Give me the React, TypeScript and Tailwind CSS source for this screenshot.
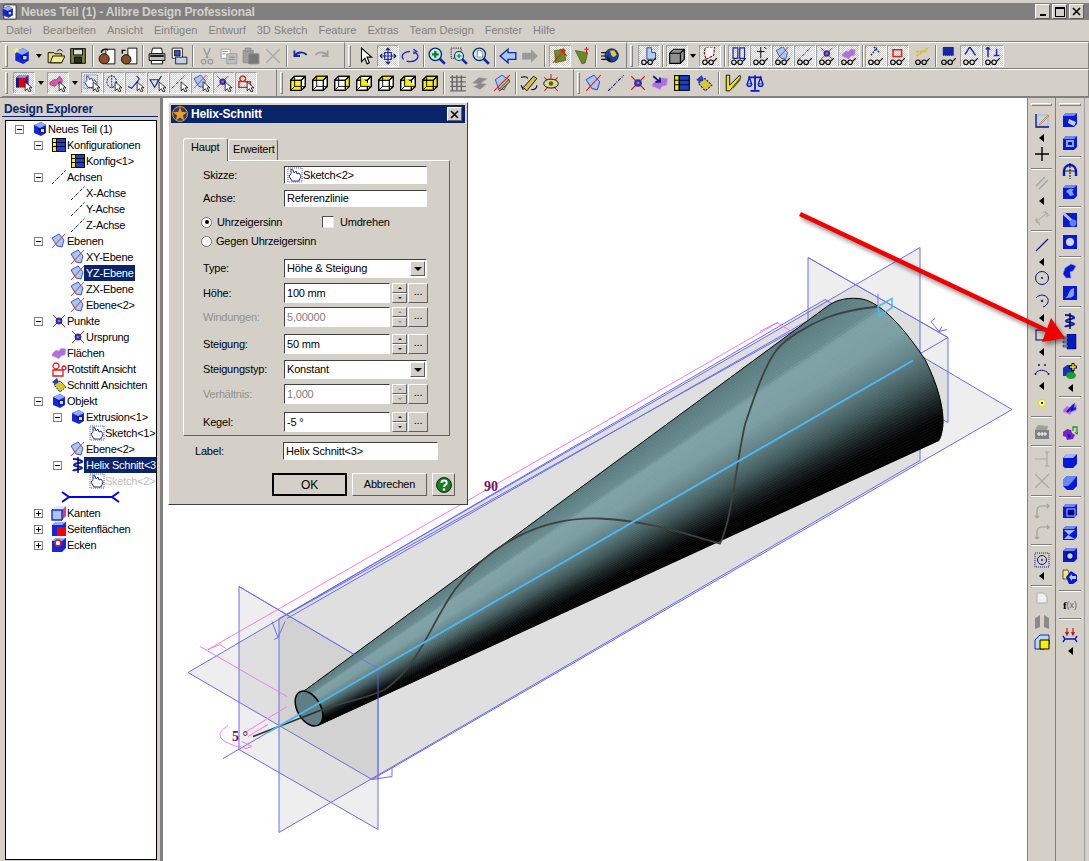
import React from "react";

const Cur = <path d="M9 7v8l2-2 1.5 3 1.6-.8-1.5-2.9H15z" fill="#fff" stroke="#000" strokeWidth=".7" />;
const Gl = (
  <g fill="none" stroke="#000" strokeWidth="1">
    <circle cx="3.5" cy="13.5" r="2" />
    <circle cx="9" cy="13.5" r="2" />
    <path d="M5.5 13.5H7M11 13l3-3" />
  </g>
);
const B = "#1428d8";
const planeShape = (
  <g>
    <path d="M1 5 8 1l5 6-2 7-5-1z" fill="#a8c8f0" stroke="#2030c0" strokeWidth=".8" />
    <path d="M1 15 14 1" stroke="#f01818" strokeWidth=".9" />
  </g>
);
const pointShape = (
  <g>
    <path d="M2 2l12 12M14 2 2 14" stroke="#e81818" strokeWidth="1" />
    <circle cx="8" cy="8" r="3.4" fill="#2030c0" />
    <circle cx="8" cy="8" r="1.3" fill="#f06060" />
  </g>
);
const axisShape = <path d="M1 15 15 1" stroke="#101060" strokeWidth="1" strokeDasharray="3 1.2 1 1.2" />;
const tableShape = (
  <g>
    <rect x="1.5" y="1.5" width="13" height="13" fill="#1840d8" stroke="#000" />
    <rect x="1.5" y="1.5" width="4" height="13" fill="#f8f000" stroke="#000" strokeWidth=".8" />
    <path d="M1.5 5.5h13M1.5 9.5h13M5.5 1.5v13" stroke="#000" strokeWidth="1" />
  </g>
);
const purpleShape = <path d="M1 9 5 5l3 1 2-3 5 1-1 6-4 1-2 3-4-2-3-1z" fill="#b070d8" stroke="#d8a8f0" strokeWidth=".6" />;
const partShape = (
  <g>
    <path d="M2 4 9 1l5 3v8l-5 3-7-3z" fill={B} />
    <path d="M2 4 9 1l5 3-6 3z" fill="#90a8f8" />
    <path d="M6 7h7v5H8z" fill="#0a1890" />
    <path d="M9 8h3v3H9z" fill="#c8d8ff" />
  </g>
);
const sketchShape = (
  <g>
    <path d="M4 7V2l2 1 1 3 2-2 1 3 2-1 2 3-2 5H5L2 9z" fill="#fff" stroke="#2030a0" strokeWidth="1" />
    <path d="M1 1h14v14H1z" fill="none" stroke="#2030a0" strokeWidth=".8" strokeDasharray="1 1" />
  </g>
);
const helixShape = (
  <g fill="none" stroke="#0818c8" strokeWidth="2">
    <path d="M3 2c6 0 10 2 9 3S4 6 4 8s8 1 8 3-8 1-9 3" />
    <path d="M8 0v16" stroke="#000" strokeWidth="1.4" />
  </g>
);
const yellowCube = (open: number) => (
  <g stroke="#000" strokeWidth="1" strokeLinejoin="round">
    <path d="M1.5 5.5 5 2h9.5v9L11 14.5H1.5z" fill={open === 6 ? "#f8f000" : "#fff"} />
    <path d="M1.5 5.5H11v9H1.5z" fill={open === 0 ? "#f8f000" : "none"} />
    <path d="M5 2h9.5L11 5.5H1.5z" fill={open === 1 ? "#f8f000" : "none"} />
    <path d="M11 5.5 14.5 2v9L11 14.5z" fill={open === 2 ? "#f8f000" : "none"} />
    <path d="M5 2v9h9.5M5 11l-3.5 3.5" fill={open === 3 ? "#f8f000" : "none"} strokeWidth=".8" />
  </g>
);
const gl = (n: React.ReactNode) => (
  <g>
    <g transform="translate(1 -1) scale(.85)">{n}</g>
    {Gl}
  </g>
);
const cu = (n: React.ReactNode) => (
  <g>
    <g transform="scale(.85)">{n}</g>
    {Cur}
  </g>
);
const blueBox = (inner: React.ReactNode) => (
  <g>
    <path d="M1 4 4 1h11v11l-3 3H1z" fill="#0818d8" />
    <path d="M1 4 4 1h11l-3 3z" fill="#7088f0" />
    {inner}
  </g>
);

const ICONS: Record<string, React.ReactNode> = {
  newPart: (
    <g>
      {partShape}
      <path d="M3 0l.8 2 2-.6L4.5 3l1 1.6-2-.4L2 6l-.3-2L0 3l2-.8z" fill="#f8f060" />
    </g>
  ),
  open: (
    <g stroke="#000" strokeWidth=".8">
      <path d="M1 5h5l1 1h6v8H1z" fill="#e8d878" />
      <path d="M3 14 5 8h11l-3 6z" fill="#f8e890" />
      <path d="M9 4c1-2 3-2 4-1l1 1" fill="none" />
    </g>
  ),
  save: (
    <g stroke="#000" strokeWidth=".8">
      <rect x="1.5" y="1.5" width="13" height="13" fill="#808040" />
      <rect x="4" y="2" width="8" height="5" fill="#e0e0d0" />
      <rect x="5" y="9" width="6" height="5" fill="#303010" />
    </g>
  ),
  lockA: (
    <g>
      <path d="M7 2h8v13H7z" fill="#fff" stroke="#000" strokeWidth=".8" />
      <circle cx="5.5" cy="10.5" r="4.5" fill="#8a5028" stroke="#000" strokeWidth=".8" />
      <path d="M3 5c0-3 5-4 6-2" fill="none" stroke="#000" strokeWidth="1.2" />
    </g>
  ),
  lockB: (
    <g>
      <path d="M7 1h8v14H7z" fill="#fff" stroke="#000" strokeWidth=".8" />
      <circle cx="5.5" cy="11" r="4.2" fill="#8a5028" stroke="#000" strokeWidth=".8" />
      <path d="M5 3H2v3" fill="none" stroke="#000" strokeWidth="1.2" />
    </g>
  ),
  print: (
    <g stroke="#000" strokeWidth=".8">
      <path d="M4 1h8l1 5H3z" fill="#fff" />
      <path d="M1 6h14v6H1z" fill="#c0c0c0" />
      <path d="M3 12h10v3H3z" fill="#fff" />
      <path d="M2 8h12" strokeWidth="1.5" />
    </g>
  ),
  preview: (
    <g stroke="#000" strokeWidth=".7">
      <path d="M2 1h9v9H2z" fill="#fff" />
      <path d="M4 3h5v5H4z" fill="#2858d0" />
      <path d="M5 9h10v6H5z" fill="#c0d0e8" />
    </g>
  ),
  cut: (
    <g fill="none" stroke="#9a9a9a" strokeWidth="1.2">
      <path d="M5 1l4 9M11 1 7 10" />
      <circle cx="5" cy="13" r="2" />
      <circle cx="11" cy="13" r="2" />
    </g>
  ),
  copy: (
    <g stroke="#9a9a9a" strokeWidth=".8" fill="#fff">
      <path d="M1 2h8v8H1z" />
      <path d="M6 6h9v9H6z" fill="#c0c0c0" />
      <path d="M2 4h5M2 6h3M8 9h5M8 11h5" stroke="#808080" />
    </g>
  ),
  paste: (
    <g stroke="#8a8a8a" strokeWidth=".8" fill="#a0a0a0">
      <path d="M1 3h9v11H1z" />
      <path d="M3 1h5v3H3z" />
      <path d="M6 6h9v9H6z" fill="#787878" />
    </g>
  ),
  del: <path d="M2 2l12 12M14 2 2 14" stroke="#a8a8a8" strokeWidth="1.2" />,
  undo: <path d="M3 3v5h5M3 8c3-4 8-4 11-1" fill="none" stroke="#1428a8" strokeWidth="1.6" />,
  redo: <path d="M13 3v5H8M13 8c-3-4-8-4-11-1" fill="none" stroke="#a0a0a0" strokeWidth="1.6" />,
  arrow: <path d="M4 1v12l3-3 2 5 2-1-2-5h4z" fill="#fff" stroke="#000" strokeWidth="1" />,
  pan: (
    <g stroke="#1428a8" strokeWidth="1" fill="none">
      <path d="M8 1v14M1 8h14M6 3l2-2 2 2M6 13l2 2 2-2M3 6 1 8l2 2M13 6l2 2-2 2" />
      <rect x="5" y="5" width="6" height="6" />
    </g>
  ),
  rotate: (
    <g fill="none" stroke="#1428d8" strokeWidth="1.2">
      <ellipse cx="8" cy="8.5" rx="7" ry="4.5" strokeDasharray="12 3" />
      <path d="M11 2l3 2-3 2" />
    </g>
  ),
  zoomIn: (
    <g>
      <path d="M10 10l5 5" stroke="#1428a8" strokeWidth="2.4" />
      <circle cx="6.5" cy="6.5" r="5.5" fill="#c8e8f0" stroke="#083070" strokeWidth="1.2" />
      <path d="M6.5 3.5v6M3.5 6.5h6" stroke="#088018" strokeWidth="2" />
    </g>
  ),
  zoomBox: (
    <g>
      <rect x="1" y="1" width="9" height="9" fill="none" stroke="#000" strokeWidth=".8" strokeDasharray="1 1" />
      <path d="M10 10l5 5" stroke="#1428a8" strokeWidth="2.2" />
      <circle cx="8" cy="8" r="4" fill="#c8e8f0" stroke="#083070" />
      <path d="M8 6v4M6 8h4" stroke="#088018" />
    </g>
  ),
  zoomOut: (
    <g>
      <path d="M10 10l5 5" stroke="#1428a8" strokeWidth="2.4" />
      <circle cx="6.5" cy="6.5" r="5.5" fill="#c8e8f0" stroke="#083070" strokeWidth="1.2" />
      <path d="M5 3h3l1.5 2v4h-5z" fill="#fff" stroke="#404040" strokeWidth=".5" />
    </g>
  ),
  back: <path d="M1 8 8 2v3h7v6H8v3z" fill="#a8c8f0" stroke="#1428a8" strokeWidth="1.2" />,
  fwd: <path d="M15 8 9 2v3H1v6h8v3z" fill="#9a9a9a" />,
  green1: (
    <g>
      <path d="M3 3l9-1 1 10-9 2z" fill="#6a8a28" stroke="#384818" strokeWidth=".5" />
      <path d="M2 14 9 6M8 2l6 6M11 1l-1 3 3-1" stroke="#e81818" strokeWidth="1" fill="none" />
    </g>
  ),
  green2: (
    <g>
      <path d="M2 3l11 2-2 9-3 1z" fill="#6a8a28" stroke="#384818" strokeWidth=".5" />
      <path d="M12 0v6M10 2h4" stroke="#e81818" strokeWidth="1" />
    </g>
  ),
  globe: (
    <g>
      <path d="M0 5h5M0 8h5M0 11h5" stroke="#000" strokeWidth="1" />
      <circle cx="9.5" cy="7.5" r="6" fill="#1840a0" stroke="#000" strokeWidth=".5" />
      <path d="M8 3h4l2 4-3 2-2-2z" fill="#e8c830" />
      <path d="M5 8l3 2 1 3-3-1z" fill="#201808" />
    </g>
  ),
  asm: gl(<path d="M6 2h5v5h4v7H6z" fill="#b8d0f0" stroke="#2840a0" />),
  grayCube: (
    <g stroke="#000" strokeWidth="1">
      <path d="M1.5 5.5 5 2h9.5v9L11 14.5H1.5z" fill="#909090" />
      <path d="M1.5 5.5H11l3.5-3.5M11 5.5v9" fill="none" />
    </g>
  ),
  redCubeGl: gl(<path d="M4 1h9l-1 9-8 4-2-8z" fill="#fff" stroke="#a00" strokeWidth="1.2" strokeDasharray="3 1" />),
  g1: gl(<path d="M2 2h5v11H2zM9 2h5v11H9z" fill="none" stroke="#1428a8" strokeWidth="1.3" />),
  g2: gl(<path d="M8 1v12M4 6h8M11 1l3 2" fill="none" stroke="#000" strokeWidth="1" />),
  g3: gl(planeShape),
  g4: gl(axisShape),
  g5: gl(pointShape),
  g6: gl(purpleShape),
  g7: gl(<path d="M3 10 9 2M6 1l6 6" stroke="#1428a8" strokeWidth="1.5" fill="none" strokeDasharray="2 1" />),
  g8: gl(<path d="M3 4h9v7H3z" fill="none" stroke="#e81818" strokeWidth="1.6" />),
  g9: gl(<path d="M1 11 15 1M1 6h12" stroke="#d8c020" strokeWidth="1.6" strokeDasharray="3 1" />),
  g10: gl(<path d="M2 1h11v9H2z" fill="#1428a8" stroke="#1428a8" strokeDasharray="1 1" />),
  g11: gl(<path d="M7 1 2 9M7 1l6 9" stroke="#1428a8" strokeWidth="1.5" fill="none" />),
  g12: gl(<path d="M3 1v11M3 1 1 4M3 1l2 3M9 10h6M12 3v7" stroke="#1428d8" strokeWidth="1.6" fill="none" />),
  cRed: cu(
    <g>
      <path d="M1 4 4 1h10v10l-3 3H1z" fill="#e80000" />
      <path d="M1 4 4 1h10l-3 3z" fill="#8098f0" />
      <path d="M11 4l3-3v10l-3 3z" fill="#1428d8" />
      <path d="M1 4h3v10H1z" fill="#0c1890" />
    </g>
  ),
  cPur: cu(<path d="M1 9 5 6l3 0 3-4 3 4-1 6-4-2-3 3-5-2z" fill="#c060c0" stroke="#e81818" strokeWidth=".8" />),
  cSk: cu(sketchShape),
  cAx2: cu(
    <g fill="none" stroke="#1428a8" strokeWidth="1.1" strokeDasharray="2 1">
      <ellipse cx="7" cy="8" rx="5" ry="6" />
      <path d="M7 1v13" />
    </g>
  ),
  cLn: cu(<path d="M1 13l4 2 8-10M10 2l3 3" fill="none" stroke="#1428a8" strokeWidth="1.2" />),
  cV: cu(<path d="M1 6h9L6 14zM7 12 13 2" fill="none" stroke="#1428a8" strokeWidth="1.2" />),
  cAx: cu(axisShape),
  cPl: cu(planeShape),
  cPt: cu(pointShape),
  cRedl: cu(<path d="M2 8h12v6H2zM6 8a3 3 0 1 1 .01 0" fill="none" stroke="#e81818" strokeWidth="1.5" />),
  y0: yellowCube(0),
  y1: yellowCube(1),
  y2: yellowCube(2),
  y3: yellowCube(3),
  y4: yellowCube(1),
  y5: yellowCube(3),
  y6: yellowCube(6),
  mesh: (
    <g stroke="#686868" strokeWidth="1.3" fill="none">
      <path d="M1 3h14M1 7h14M1 11h14M1 15h14M3 1v14M7 1v14M11 1v14" />
    </g>
  ),
  wave: <path d="M1 8 7 3l8 1-6 4 5 1-6 5-6-3 4-2z" fill="#8a8a8a" stroke="#c0c0c0" strokeWidth=".6" />,
  pen: (
    <g>
      <path d="M2 5 8 1l6 4-4 9-5-1z" fill="#a8c8f0" stroke="#2030c0" strokeWidth=".7" />
      <path d="M1 15 15 1" stroke="#e81818" />
      <path d="M5 14 14 5l1 2-9 8z" fill="#d8c040" stroke="#000" strokeWidth=".6" />
    </g>
  ),
  wrench: (
    <g>
      <path d="M3 12 12 2l3 2-9 11z" fill="#d8c040" stroke="#000" strokeWidth=".8" />
      <path d="M1 3c3-1 5-1 6 1M10 14c3 0 5-1 5-4M1 10l2 4" stroke="#000" fill="none" />
    </g>
  ),
  eye: (
    <g>
      <path d="M2 15 14 3M2 3l12 12M8 0v4" stroke="#d03020" strokeWidth="1" fill="none" />
      <ellipse cx="8" cy="8.5" rx="6.5" ry="4" fill="#d8d890" stroke="#000" strokeWidth=".8" />
      <circle cx="8" cy="8.5" r="2" fill="#606010" />
    </g>
  ),
  plane: planeShape,
  axis: axisShape,
  point: pointShape,
  surf: purpleShape,
  surfArrow: (
    <g>
      {purpleShape}
      <path d="M2 2l6 5M8 3v4H4" stroke="#101880" strokeWidth="1.6" fill="none" />
    </g>
  ),
  table: tableShape,
  section: (
    <g>
      <path d="M1 5 6 1l2 4-3 3z" fill="#2840c0" />
      <path d="M3 8 9 4l6 6-6 5z" fill="#d8c830" stroke="#1428a8" strokeWidth="1" strokeDasharray="2 1" />
    </g>
  ),
  redline: <path d="M2 9h10v6H2zM5 8a3 3 0 1 1 .01 0M13 5a2 2 0 1 1-.01 0" fill="none" stroke="#e81818" strokeWidth="1.3" />,
  ruler: (
    <g>
      <path d="M2 1h3v9l9-9 1 2L5 15H2z" fill="#f0e020" stroke="#000" strokeWidth=".8" />
      <path d="M7 12 14 4l1 1-7 8z" fill="#5a6a20" />
    </g>
  ),
  balance: (
    <g fill="none" stroke="#0818c8" strokeWidth="1.2">
      <path d="M8 1v13M4 15h8M2 3h12" strokeWidth="1.6" />
      <path d="M3 3 1 9h4zM13 3l-2 6h4z" />
      <path d="M1 9a2 2 0 0 0 4 0M11 9a2 2 0 0 0 4 0" fill="#90c8f0" />
    </g>
  ),
  part: partShape,
  sketch: sketchShape,
  helix: helixShape,
  edges: (
    <g>
      <path d="M1 5h10v10H1z" fill="#a8c8f0" />
      <path d="M1 5 5 1h10l-4 4z" fill="#e0e8ff" />
      <path d="M11 5l4-4v10l-4 4z" fill="#e04070" />
      <path d="M1 5h10v10M1 5v10h10" stroke={B} strokeWidth="1.4" fill="none" />
    </g>
  ),
  faces: (
    <g>
      <path d="M1 4 5 1h10v10l-4 4H1z" fill={B} />
      <path d="M1 4 5 1h10l-4 3z" fill="#98b0f8" />
      <rect x="6" y="6" width="9" height="9" fill="#f00000" />
    </g>
  ),
  corners: (
    <g>
      <path d="M1 4 5 1h10v10l-4 4H1z" fill={B} />
      <path d="M1 4 5 1h10l-4 3z" fill="#98b0f8" />
      <circle cx="7" cy="6" r="3" fill="#fff" stroke="#e01818" strokeWidth="1.6" />
    </g>
  ),
  pencilAxis: (
    <g>
      <rect x="3" y="2" width="11" height="11" fill="#b8d8f0" stroke="#80a0d8" strokeWidth=".5" />
      <path d="M2 1v13h13" fill="none" stroke="#101080" strokeWidth="1.3" />
      <path d="M5 11 14 2l1 1-9 9z" fill="#f0d020" stroke="#c02020" strokeWidth=".4" />
    </g>
  ),
  cross: <path d="M8 1v14M1 8h14" stroke="#000" strokeWidth="1.4" />,
  parGray: <path d="M2 11 11 2M5 14l9-9" stroke="#a0a0a0" strokeWidth="1.3" />,
  dimGray: <path d="M2 12 13 3M2 12l1-4M2 12l4 1M13 3l-4-1M13 3l0 4M1 9l5 6M11 1l5 5" fill="none" stroke="#a8a8a8" strokeWidth="1" />,
  line: <path d="M2 14 14 2" stroke="#101080" strokeWidth="1.1" />,
  circle: (
    <g>
      <circle cx="8" cy="8" r="6.5" fill="none" stroke="#101080" strokeWidth="1" />
      <circle cx="8" cy="8" r="1" fill="#101080" />
    </g>
  ),
  arc: (
    <g fill="none" stroke="#101080" strokeWidth="1">
      <path d="M2 5c3-4 10-4 12 1 1 4-2 7-5 8" />
      <circle cx="8" cy="8" r=".8" fill="#101080" />
    </g>
  ),
  rect: <rect x="2" y="3" width="12" height="10" fill="none" stroke="#101080" strokeWidth="1.1" />,
  spline: (
    <g fill="#101080">
      <path d="M1 13c3-5 10-5 14 0" fill="none" stroke="#101080" strokeWidth="1" />
      <circle cx="5" cy="4" r="1" />
      <circle cx="11" cy="4" r="1" />
      <circle cx="1.5" cy="13" r="1" />
      <circle cx="14.5" cy="13" r="1" />
    </g>
  ),
  pointY: (
    <g>
      <circle cx="8" cy="8" r="3.4" fill="#fff" stroke="#e8e000" strokeWidth="1.5" />
      <circle cx="8" cy="8" r="1.1" fill="#000" />
    </g>
  ),
  film: (
    <g>
      <path d="M1 6h14v9H1z" fill="#808080" />
      <path d="M1 6 4 1l10 1-1 4z" fill="#a0a0a0" />
      <path d="M3 10h10M5 8v4M8 8v4M11 8v4" stroke="#fff" />
    </g>
  ),
  trimGray: <path d="M1 8h11M13 1v14M11 1h4M11 15h4" stroke="#a8a8a8" strokeWidth="1.2" fill="none" />,
  xGray: <path d="M1 1l14 14M15 1 1 15" stroke="#a8a8a8" strokeWidth="1.3" />,
  filletGray: <path d="M3 15V8c0-3 2-5 5-5h7M13 1l2 2-2 2M1 13l2 2 2-2" stroke="#a0a0a0" strokeWidth="1.2" fill="none" />,
  circDots: (
    <g>
      <rect x="1" y="1" width="14" height="14" fill="none" stroke="#101080" strokeWidth="1" strokeDasharray="1 1" />
      <circle cx="8" cy="8" r="4.5" fill="none" stroke="#101080" />
      <circle cx="8" cy="8" r=".9" fill="#101080" />
    </g>
  ),
  docGray: <path d="M3 3h7l3 4v6H3z" fill="#f0f0f0" stroke="#b0b0b0" />,
  bookGray: <path d="M1 4 6 1v12l-5 2zM15 4l-5-3v12l5 2z" fill="#8a8a8a" />,
  yellowBox: (
    <g>
      <path d="M1 6 6 1h9v9l-5 5H1z" fill="#b8d8f0" stroke="#1428a8" />
      <path d="M6 6h9v9H6z" fill="#f8f000" stroke="#000" />
    </g>
  ),
  extr: blueBox(<path d="M7 7l7 3-2 4-6-3z" fill="#c0d0ff" />),
  extrCut: blueBox(
    <g>
      <rect x="4" y="5" width="8" height="7" fill="#90a8f0" />
      <rect x="6" y="7" width="4" height="3" fill="#0818a0" />
    </g>
  ),
  revolve: (
    <g fill="none" stroke="#0818c8">
      <path d="M2 13V8a6 6 0 0 1 12 0v5" strokeWidth="2.4" />
      <path d="M8 0v16" stroke="#000" strokeWidth="1" strokeDasharray="2 1" />
      <path d="M1 8h14" stroke="#000" strokeWidth=".8" />
    </g>
  ),
  revolveCut: blueBox(<path d="M4 8c2-4 6-4 8-2l-2 1 2 4-4 1-2-3z" fill="#88a0f0" />),
  sweep: (
    <g>
      <rect x="1" y="1" width="14" height="14" fill="#0818d8" />
      <path d="M1 1l10 9" stroke="#b0c0ff" strokeWidth="3" />
      <circle cx="11" cy="11" r="3.4" fill="#6080f0" />
    </g>
  ),
  sqHole: (
    <g>
      <rect x="1" y="1" width="14" height="14" fill="#0818d8" />
      <circle cx="8" cy="8" r="4" fill="#d0d8ff" />
    </g>
  ),
  loft: <path d="M1 11l2-6 6-4 5 2-3 5-3 1 1 6H4z" fill="#0818d8" stroke="#8098f8" strokeWidth=".6" />,
  loftCut: (
    <g>
      <path d="M1 1h14v14H1z" fill="#0818d8" />
      <path d="M3 13c4-1 3-9 9-10v7c-2 3-5 3-9 3z" fill="#80a0f8" />
    </g>
  ),
  helixCut: (
    <g fill="#0818c8" stroke="#000" strokeWidth=".5">
      <path d="M5 0h9v15H5z" />
      <path d="M1 3h5v2H1zM1 7h5v2H1zM1 11h5v2H1z" fill="#80a0f8" />
    </g>
  ),
  addCube: (
    <g>
      <path d="M1 5 5 2h7v8l-3 3H1z" fill="#1830c8" />
      <ellipse cx="9" cy="12.5" rx="5" ry="3.5" fill="#18a030" />
      <path d="M11 0v8M7 4h8" stroke="#000" strokeWidth="3" />
      <path d="M11 1v6M8 4h6" stroke="#f8f000" strokeWidth="1.4" />
    </g>
  ),
  solidPurple: (
    <g>
      {purpleShape}
      <path d="M5 11l6-6-1 4 4-2" stroke="#0818d8" strokeWidth="2.2" fill="none" />
    </g>
  ),
  purpleGreen: (
    <g>
      <path d="M1 7l4-3 4 1 1 3 3 2-2 4-6 1-1-3-3-1z" fill="#8020c8" />
      <path d="M5 9l4 1-2 4z" fill="#0818d8" />
      <path d="M11 6V2h4v5M13 7l2 2 1-2" stroke="#10a020" strokeWidth="1.3" fill="none" />
    </g>
  ),
  round1: (
    <g>
      <path d="M5 1h10v10l-4 4H4c-2 0-3-1-3-3V5z" fill="#0818d8" />
      <path d="M5 1h10l-4 4H1z" fill="#a0b8f8" />
    </g>
  ),
  round2: (
    <g>
      <path d="M5 1h10v10l-4 4H5l-4-4V5z" fill="#0818d8" />
      <path d="M5 1h10l-4 5-5 5-5 0V5z" fill="#6888f0" />
    </g>
  ),
  shell1: blueBox(<rect x="5" y="6" width="8" height="7" fill="#000090" stroke="#b0c0ff" />),
  shell2: blueBox(<path d="M2 5h11L7 10zM2 14l4-4 7 4z" fill="#a0b8f8" />),
  holeCyl: blueBox(<circle cx="8" cy="9" r="3.4" fill="#c0d0ff" stroke="#000060" strokeWidth="1.4" />),
  pattern: (
    <g>
      <path d="M1 1h5l1 3v6H1z" fill="#f0e878" stroke="#000" strokeWidth=".6" />
      <path d="M4 8l5-6 6 4v6l-4 3H7z" fill="#0818d8" />
      <path d="M7 8l3-3v2h4v3h-4v2z" fill="#b8c8ff" />
    </g>
  ),
  dimRed: (
    <g>
      <path d="M5 1v6M11 1v6M3.5 5 5 8l1.5-3M9.5 5 11 8l1.5-3" stroke="#b01818" strokeWidth="1.1" fill="none" />
      <path d="M1 9l2 3-2 3M15 9l-2 3 2 3M2 12h12" stroke="#0818c8" strokeWidth="1.4" fill="none" />
    </g>
  ),
};

const Ico = ({ k, big }: { k: string; big?: boolean }) => (
  <svg viewBox="0 0 16 16" className={big ? "block w-[18px] h-[18px] shrink-0" : "block w-4 h-4 shrink-0"} aria-hidden>
    {ICONS[k]}
  </svg>
);

const WIDTHS: Record<string, string> = {
  "1": "w-px",
  "2": "w-[2px]",
  "3": "w-[3px]",
  "4": "w-[4px]",
  "5": "w-[5px]",
  "6": "w-[6px]",
  "7": "w-[7px]",
  "8": "w-[8px]",
  "10": "w-[10px]",
  "12": "w-[12px]",
};

const Grip = () => <div className="w-[3px] h-[22px] ml-[3px] shrink-0 border border-t-white border-l-white border-r-[#808080] border-b-[#808080]" />;

const Item = ({ it }: { it: string }) => {
  if (/^s\d+$/.test(it))
    return (
      <div className={`${WIDTHS[it.slice(1)]} h-[22px] flex justify-center shrink-0`}>
        <div className="w-[2px] h-full border-l border-l-[#808080] border-r border-r-white" />
      </div>
    );
  if (/^_\d+$/.test(it)) return <div className={`${WIDTHS[it.slice(1)]} shrink-0`} />;
  if (/^d\d+$/.test(it))
    return (
      <div className={`${WIDTHS[it.slice(1)]} h-[22px] flex items-center justify-center shrink-0`}>
        <div className="w-0 h-0 border-l-[3px] border-r-[3px] border-t-[4px] border-l-transparent border-r-transparent border-t-black" />
      </div>
    );
  if (it.startsWith("p:"))
    return (
      <div className="w-[22px] h-[22px] flex items-center justify-center shrink-0 border border-t-[#a0a0a0] border-l-[#a0a0a0] border-b-white border-r-white bg-[repeating-conic-gradient(#ffffff_0_25%,#d4d0c8_0_50%)] bg-[length:2px_2px]">
        <Ico k={it.slice(2)} big />
      </div>
    );
  return (
    <div className="w-[22px] h-[22px] flex items-center justify-center shrink-0">
      <Ico k={it} big />
    </div>
  );
};

const Bar = ({ cls, items }: { cls: string; items: string[] }) => (
  <div className={`flex items-center h-full border-t border-t-white border-b border-b-[#808080] border-r border-r-[#808080] ${cls}`}>
    <Grip />
    {items.map((it, i) => (
      <Item key={i} it={it} />
    ))}
  </div>
);

const menu = ["Datei", "Bearbeiten", "Ansicht", "Einfügen", "Entwurf", "3D Sketch", "Feature", "Extras", "Team Design", "Fenster", "Hilfe"];

const R1A = ["_3", "newPart", "d12", "open", "save", "s7", "lockA", "lockB", "s6", "print", "preview", "s6", "cut", "copy", "paste", "del", "s5", "undo", "redo"];
const R1B = ["_4", "arrow", "p:pan", "rotate", "s5", "zoomIn", "zoomBox", "zoomOut", "s5", "back", "fwd", "s8", "p:green1", "green2", "s6", "globe"];
const R1C = ["_5", "p:asm", "s6", "p:grayCube", "d10", "_1", "p:redCubeGl", "s7", "p:g1", "p:g2", "p:g3", "p:g4", "p:g5", "p:g6", "s5", "p:g7", "p:g8", "_3", "g9", "s4", "g10", "p:g11", "p:g12"];
const R2A = ["_5", "p:cRed", "d12", "p:cPur", "d12", "p:cSk", "p:cAx2", "p:cLn", "p:cV", "p:cAx", "p:cPl", "p:cPt", "p:cRedl"];
const R2B = ["_4", "y0", "y1", "y2", "y3", "y4", "y5", "y6", "s6", "mesh", "wave", "pen", "s5", "wrench", "eye"];
const R2C = ["_3", "plane", "axis", "point", "surfArrow", "table", "section", "s7", "ruler", "balance"];

const MT: Record<number, string> = {
  3: "mt-[3px]",
  4: "mt-[4px]",
  5: "mt-[5px]",
  6: "mt-[6px]",
  7: "mt-[7px]",
  8: "mt-[8px]",
};

const COL1: [string, number][] = [
  ["pencilAxis", 7], ["tri", 5], ["cross", 4], ["-", 6], ["parGray", 5], ["tri", 6], ["dimGray", 5], ["-", 4],
  ["line", 5], ["tri", 5], ["circle", 4], ["arc", 7], ["tri", 5], ["rect", 5], ["tri", 5], ["spline", 5], ["tri", 5], ["pointY", 5],
  ["-", 5], ["film", 6], ["-", 5], ["trimGray", 4], ["xGray", 6], ["-", 6], ["filletGray", 6], ["filletGray", 5], ["-", 4],
  ["circDots", 6], ["tri", 4], ["-", 5], ["docGray", 3], ["bookGray", 8], ["yellowBox", 4],
];
const COL2: [string, number][] = [
  ["extr", 6], ["extrCut", 7], ["-", 5], ["revolve", 5], ["revolveCut", 5], ["-", 6], ["sweep", 4], ["sqHole", 6], ["-", 6],
  ["loft", 5], ["loftCut", 6], ["-", 5], ["helix", 5], ["helixCut", 5], ["-", 6], ["addCube", 5], ["tri", 5], ["-", 4],
  ["solidPurple", 3], ["purpleGreen", 8], ["-", 5], ["round1", 5], ["round2", 6], ["-", 5], ["shell1", 5], ["shell2", 6], ["holeCyl", 6], ["pattern", 6],
  ["-", 5], ["fx", 5], ["-", 5], ["dimRed", 7], ["tri", 4],
];

const SideCol = ({ data, cls, sepCls }: { data: [string, number][]; cls: string; sepCls: string }) => (
  <div className={`flex flex-col items-center h-full ${cls}`}>
    <div className={`mt-[5px] h-[3px] border border-t-white border-l-white border-b-[#808080] border-r-[#808080] ${sepCls}`} />
    {data.map(([k, m], i) =>
      k === "-" ? (
        <div key={i} className={`${MT[m]} h-[2px] border-t border-t-[#808080] border-b border-b-white ${sepCls}`} />
      ) : k === "tri" ? (
        <div key={i} className={`${MT[m]} h-[8px] flex items-center`}>
          <div className="w-0 h-0 border-t-[4px] border-b-[4px] border-r-[5px] border-t-transparent border-b-transparent border-r-black" />
        </div>
      ) : k === "fx" ? (
        <div key={i} className={`${MT[m]} h-4 flex items-center text-[11px] leading-none font-bold text-black font-['Liberation_Serif',serif]`}>
          f<span className="font-normal font-['Liberation_Sans',sans-serif] text-[9px] text-[#606060]">(x)</span>
        </div>
      ) : (
        <div key={i} className={MT[m]}>
          <Ico k={k} />
        </div>
      )
    )}
  </div>
);

type TreeRow = { l: number; e?: string; i?: string; t?: string; sel?: boolean; dim?: boolean; marker?: boolean };
const TREE: TreeRow[] = [
  { l: 0, e: "-", i: "part", t: "Neues Teil (1)" },
  { l: 1, e: "-", i: "table", t: "Konfigurationen" },
  { l: 2, i: "table", t: "Konfig<1>" },
  { l: 1, e: "-", i: "axis", t: "Achsen" },
  { l: 2, i: "axis", t: "X-Achse" },
  { l: 2, i: "axis", t: "Y-Achse" },
  { l: 2, i: "axis", t: "Z-Achse" },
  { l: 1, e: "-", i: "plane", t: "Ebenen" },
  { l: 2, i: "plane", t: "XY-Ebene" },
  { l: 2, i: "plane", t: "YZ-Ebene", sel: true },
  { l: 2, i: "plane", t: "ZX-Ebene" },
  { l: 2, i: "plane", t: "Ebene<2>" },
  { l: 1, e: "-", i: "point", t: "Punkte" },
  { l: 2, i: "point", t: "Ursprung" },
  { l: 1, i: "surf", t: "Flächen" },
  { l: 1, i: "redline", t: "Rotstift Ansicht" },
  { l: 1, i: "section", t: "Schnitt Ansichten" },
  { l: 1, e: "-", i: "part", t: "Objekt" },
  { l: 2, e: "-", i: "part", t: "Extrusion<1>" },
  { l: 3, i: "sketch", t: "Sketch<1>" },
  { l: 2, i: "plane", t: "Ebene<2>" },
  { l: 2, e: "-", i: "helix", t: "Helix Schnitt<3>", sel: true },
  { l: 3, i: "sketch", t: "Sketch<2>", dim: true },
  { l: 0, marker: true },
  { l: 1, e: "+", i: "edges", t: "Kanten" },
  { l: 1, e: "+", i: "faces", t: "Seitenflächen" },
  { l: 1, e: "+", i: "corners", t: "Ecken" },
];
const INDENT = ["pl-[9px]", "pl-[28px]", "pl-[47px]", "pl-[66px]"];

const Tree = () => (
  <div className="w-[152px] ml-[5px] mt-[3px] h-[740px] bg-white border border-black overflow-hidden">
    {TREE.map((r, i) =>
      r.marker ? (
        <div key={i} className="h-4 pl-[55px] flex items-center">
          <svg viewBox="0 0 60 12" className="w-[60px] h-3" aria-hidden>
            <path d="M1 1l7 5-7 5M58 1l-7 5 7 5M7 6h45" fill="none" stroke="#0000f0" strokeWidth="2" />
          </svg>
        </div>
      ) : (
        <div key={i} className={`h-4 flex items-center whitespace-nowrap ${INDENT[r.l]}`}>
          {r.e ? (
            <div className="w-[9px] h-[9px] shrink-0 border border-[#808080] flex items-center justify-center relative">
              <div className="w-[5px] h-px bg-black" />
              {r.e === "+" ? <div className="absolute w-px h-[5px] bg-black" /> : null}
            </div>
          ) : (
            <div className="w-[9px] shrink-0" />
          )}
          <div className="w-[8px] shrink-0" />
          <Ico k={r.i!} />
          <span
            className={`-ml-[2px] pl-[2px] pr-px h-4 leading-4 text-[11px] tracking-[-0.25px] ${r.sel ? "bg-[#0a246a] text-white" : r.dim ? "text-[#c0c0c0]" : "text-black"}`}
          >
            {r.t}
          </span>
        </div>
      )
    )}
  </div>
);

const Sunken = ({ cls, children, dis }: { cls: string; children?: React.ReactNode; dis?: boolean }) => (
  <div
    className={`bg-white flex items-center whitespace-nowrap border border-t-[#404040] border-l-[#404040] border-b-white border-r-white pl-[2px] text-[11px] leading-none ${dis ? "text-[#808080]" : "text-black"} ${cls}`}
  >
    {children}
  </div>
);

const Raised = ({ cls, children }: { cls: string; children?: React.ReactNode }) => (
  <div className={`bg-[#d4d0c8] flex items-center justify-center border border-t-white border-l-white border-b-[#606060] border-r-[#606060] ${cls}`}>{children}</div>
);

const Lbl = ({ t, dis }: { t: string; dis?: boolean }) => (
  <div className={`w-[81px] shrink-0 text-[11px] ${dis ? "text-[#909090]" : "text-black"}`}>{t}</div>
);

const NumRow = ({ label, value, dis, cls }: { label: string; value: string; dis?: boolean; cls: string }) => (
  <div className={`flex items-center h-[20px] ${cls}`}>
    <Lbl t={label} dis={dis} />
    <Sunken cls="w-[106px] h-full" dis={dis}>
      {value}
    </Sunken>
    <div className="w-[15px] ml-[2px] h-full flex flex-col shrink-0">
      <Raised cls="h-[10px] w-full">
        <div className={`w-0 h-0 border-l-[2px] border-r-[2px] border-b-[2px] border-l-transparent border-r-transparent ${dis ? "border-b-[#909090]" : "border-b-black"}`} />
      </Raised>
      <Raised cls="h-[10px] w-full">
        <div className={`w-0 h-0 border-l-[2px] border-r-[2px] border-t-[2px] border-l-transparent border-r-transparent ${dis ? "border-t-[#909090]" : "border-t-black"}`} />
      </Raised>
    </div>
    <Raised cls="w-[20px] ml-px h-full text-[11px] text-black pb-[3px]">...</Raised>
  </div>
);

const SelRow = ({ label, value, cls }: { label: string; value: string; cls: string }) => (
  <div className={`flex items-center h-[19px] ${cls}`}>
    <Lbl t={label} />
    <Sunken cls="w-[143px] h-full justify-between pr-px">
      {value}
      <Raised cls="w-[15px] h-[15px]">
        <div className="w-0 h-0 border-l-[4px] border-r-[4px] border-t-[4px] border-l-transparent border-r-transparent border-t-black" />
      </Raised>
    </Sunken>
  </div>
);

const Dialog = () => (
  <div className="absolute left-[168px] top-[102px] w-[300px] h-[403px] bg-[#d4d0c8] border border-t-white border-l-white border-r-[#404040] border-b-[#404040] p-[1px] tracking-[-0.2px] font-['Liberation_Sans',sans-serif]">
    <div className="h-[18px] bg-[#0a246a] mx-px mt-px flex items-center">
      <svg viewBox="0 0 16 16" className="w-4 h-4 ml-px shrink-0" aria-hidden>
        <circle cx="8" cy="8" r="7.5" fill="#3a3a70" stroke="#d8a030" strokeWidth="1" />
        <path d="M8 1l1.8 5 5.2.2-4.100 3.200 1.400 5L8 11.500 3.700 14.400l1.400-5L1 6.200 6.200 6z" fill="#e8a020" />
      </svg>
      <span className="ml-[3px] text-white font-bold text-[12px] leading-none">Helix-Schnitt</span>
      <Raised cls="w-[15px] h-[14px] ml-auto mr-[3px] shrink-0">
        <svg viewBox="0 0 9 9" className="w-[9px] h-[9px]" aria-hidden>
          <path d="M1 1l7 7M8 1 1 8" stroke="#000" strokeWidth="1.6" />
        </svg>
      </Raised>
    </div>
    <div className="ml-[13px] mt-[14px] flex items-end h-[23px]">
      <div className="w-[45px] h-[23px] pt-0 pl-[7px] text-[11px] text-black border border-t-white border-l-white border-b-0 border-r-[#606060] rounded-t-[3px] relative z-10 bg-[#d4d0c8] -mb-px">Haupt</div>
      <div className="w-[50px] h-[21px] pl-[4px] pt-px text-[11px] text-black border border-t-white border-l-white border-b-0 border-r-[#606060] rounded-t-[3px]">Erweitert</div>
    </div>
    <div className="ml-[13px] w-[267px] h-[276px] border border-t-white border-l-white border-r-[#606060] border-b-[#606060] pl-[19px] pt-[5px]">
      <div className="flex items-center h-[18px]">
        <Lbl t="Skizze:" />
        <Sunken cls="w-[143px] h-full">
          <Ico k="sketch" />
          <span>{"Sketch<2>"}</span>
        </Sunken>
      </div>
      <div className="flex items-center h-[17px] mt-[6px]">
        <Lbl t="Achse:" />
        <Sunken cls="w-[143px] h-full">Referenzlinie</Sunken>
      </div>
      <div className="flex items-center h-[14px] mt-[8px] -ml-[2px] text-[11px] text-black">
        <div className="w-[11px] h-[11px] rounded-full bg-white border border-[#707070] flex items-center justify-center shrink-0">
          <div className="w-[4px] h-[4px] rounded-full bg-black" />
        </div>
        <span className="ml-[5px] w-[105px]">Uhrzeigersinn</span>
        <div className="w-[12px] h-[12px] bg-white border border-t-[#505050] border-l-[#505050] border-b-[#e8e8e8] border-r-[#e8e8e8] shrink-0" />
        <span className="ml-[6px]">Umdrehen</span>
      </div>
      <div className="flex items-center h-[14px] mt-[5px] -ml-[2px] text-[11px] text-black">
        <div className="w-[11px] h-[11px] rounded-full bg-white border border-[#707070] shrink-0" />
        <span className="ml-[4px]">Gegen Uhrzeigersinn</span>
      </div>
      <SelRow label="Type:" value="Höhe & Steigung" cls="mt-[11px]" />
      <NumRow label="Höhe:" value="100 mm" cls="mt-[5px]" />
      <NumRow label="Windungen:" value="5,00000" dis cls="mt-[4px]" />
      <NumRow label="Steigung:" value="50 mm" cls="mt-[7px]" />
      <SelRow label="Steigungstyp:" value="Konstant" cls="mt-[6px]" />
      <NumRow label="Verhältnis:" value="1,000" dis cls="mt-[5px]" />
      <NumRow label="Kegel:" value="-5 °" cls="mt-[8px]" />
    </div>
    <div className="flex items-center h-[18px] mt-[6px] ml-[25px]">
      <div className="w-[88px] text-[11px] text-black">Label:</div>
      <Sunken cls="w-[155px] h-full">{"Helix Schnitt<3>"}</Sunken>
    </div>
    <div className="flex h-[23px] mt-[13px] ml-[102px]">
      <div className="w-[75px] h-full bg-[#d4d0c8] border-2 border-black flex items-center justify-center text-[12px] text-black">OK</div>
      <Raised cls="w-[75px] h-full ml-[5px] text-[11px] text-black">Abbrechen</Raised>
      <Raised cls="w-[23px] h-full ml-[5px]">
        <svg viewBox="0 0 16 16" className="w-4 h-4" aria-hidden>
          <circle cx="8" cy="8" r="7.5" fill="#108020" stroke="#000" strokeWidth=".8" />
          <path d="M5.5 6c0-3.200 5.200-3.200 5.200 0 0 2-2.600 1.800-2.600 4" fill="none" stroke="#fff" strokeWidth="2" />
          <circle cx="8" cy="12.5" r="1.300" fill="#fff" />
        </svg>
      </Raised>
    </div>
  </div>
);

const RAMP: [number, number[]][] = [
  [0, [88, 122, 126]],
  [0.17, [104, 140, 144]],
  [0.2, [126, 162, 166]],
  [0.36, [122, 158, 162]],
  [0.5, [98, 130, 134]],
  [0.65, [64, 88, 90]],
  [0.78, [28, 38, 39]],
  [0.9, [0, 0, 0]],
  [1, [0, 0, 0]],
];
const rampColor = (t: number) => {
  for (let i = 1; i < RAMP.length; i++) {
    if (t <= RAMP[i][0]) {
      const [a, ca] = RAMP[i - 1];
      const [b, cb] = RAMP[i];
      const f = (t - a) / (b - a);
      return `rgb(${ca.map((v, j) => Math.round(v + (cb[j] - v) * f)).join(",")})`;
    }
  }
  return "#000";
};
const ST = [302, 693];
const SB = [317, 727];
const LT = [827, 307];
const LB = [938, 442];
const pt = (t: number) => {
  const p = [ST[0] + (SB[0] - ST[0]) * t, ST[1] + (SB[1] - ST[1]) * t];
  const q = [LT[0] + (LB[0] - LT[0]) * t, LT[1] + (LB[1] - LT[1]) * t];
  const e = [q[0] + (q[0] - p[0]) * 0.25, q[1] + (q[1] - p[1]) * 0.25];
  return { p, e };
};
const STRIPS = Array.from({ length: 64 }, (_, i) => {
  const a = pt(i / 64);
  const b = pt((i + 1) / 64);
  return {
    d: `M${a.p[0]} ${a.p[1]}L${a.e[0]} ${a.e[1]}L${b.e[0]} ${b.e[1]}L${b.p[0]} ${b.p[1]}Z`,
    c: rampColor((i + 0.5) / 64),
  };
});
const CONE = "M302 693L827 307C835 301 845 298 858 299C880 300 905 330 925 360C938 385 944 410 943 425C942 435 940 440 938 442L317 727Z";

const Scene = () => (
  <svg viewBox="163 99 864 762" className="block w-full h-full">
    <defs>
      <clipPath id="coneClip">
        <path d={CONE} />
      </clipPath>
    </defs>
    <g fill="#787878" fillOpacity=".13" stroke="#6d6cf0" strokeWidth="1">
      <polygon points="188,673 825,300 1012,410 372,780" />
      <polygon points="279,619 920,248 920,461 279,833" />
      <polygon points="239,587 378,669 378,830 239,750" />
      <polygon points="808,258 948,338 948,423 808,345" />
      <path d="M223 759 948 338M808 323 287 615M287 619 808 321" fill="none" />
    </g>
    <g fill="none" stroke="#6d6cf0" strokeWidth="1">
      <path d="M272 622 278 638 274 640M285 622 278 638M372 780l20-3v-9M931 322l8 10 8-2M931 322l4-3M939 332l3-5" />
    </g>
    <g fill="none" stroke="#f47cf0" strokeWidth="1">
      <path d="M208 650 778 323M200 647 287 697M245 733 287 707M760 332 777 323 793 333M208 650l12-5 6 4" />
      <path d="M228 726c-4 3-8 6-8 9 0 5 6 8 14 11l12 3 6-2-10-5M248 737l20-12" />
    </g>
    <g clipPath="url(#coneClip)">
      {STRIPS.map((s, i) => (
        <path key={i} d={s.d} fill={s.c} stroke={s.c} strokeWidth=".6" />
      ))}
    </g>
    <path d="M302 693L827 307C835 301 845 298 858 299C880 300 905 330 925 360C938 385 944 410 943 425C942 435 940 440 938 442" fill="none" stroke="#000" strokeWidth="1" />
    <ellipse cx="309" cy="709" rx="19" ry="11.6" transform="rotate(60 309 709)" fill="#5e7f83" stroke="#000" strokeWidth="1.5" />
    <g fill="none" stroke="#6d6cf0" strokeWidth="1" strokeOpacity=".85">
      <path d="M239 587 378 669V780M808 258 948 338" />
      <path d="M878 294V307" />
    </g>
    <path d="M878 307C860 309 840 313 827 318C805 327 785 340 777 350C765 365 755 395 745 425C735 470 732 520 720 544C700 540 660 522 600 519C540 517 490 545 455 590C430 625 420 665 385 690C365 700 340 703 320 711" fill="none" stroke="#404040" strokeWidth="1.8" />
    <path d="M320 711 253 737" stroke="#303030" strokeWidth="1.5" />
    <path d="M268 733 913 361" stroke="#4db8f4" strokeWidth="2" />
    <polygon points="878,307 892,299 892,308 879,317" fill="none" stroke="#4db8f4" strokeWidth="1.5" />
    <text x="484" y="491" fontFamily="'Liberation Serif',serif" fontWeight="700" fontSize="14" fill="#7a1060">90</text>
    <text x="232" y="741" fontFamily="'Liberation Serif',serif" fontWeight="700" fontSize="14" fill="#7a1060">5 °</text>
  </svg>
);

export default function App() {
  return (
    <div className="relative w-[1089px] h-[861px] overflow-hidden bg-[#d4d0c8] font-['Liberation_Sans',sans-serif] flex flex-col">
      <div className="h-[20px] pt-[3px] shrink-0">
        <div className="h-[17px] bg-[#808080] flex items-center">
          <svg viewBox="0 0 16 16" className="w-4 h-4 ml-[2px] shrink-0" aria-hidden>
            <path d="M2 1h12v14H2z" fill="#fff" stroke="#000" strokeWidth=".6" />
            <g transform="translate(-1 1) scale(.85)">{partShape}</g>
          </svg>
          <span className="ml-[3px] text-[12px] leading-none font-bold tracking-[-0.15px] text-[#d4d0c8]">Neues Teil (1) - Alibre Design Professional</span>
          <div className="ml-auto mr-[5px] flex">
            <Raised cls="w-[15px] h-[15px] items-end pb-[2px]">
              <div className="w-[6px] h-[2px] bg-black" />
            </Raised>
            <Raised cls="w-[15px] h-[15px] ml-[2px]">
              <div className="w-[10px] h-[10px] border border-black border-t-2" />
            </Raised>
            <Raised cls="w-[15px] h-[15px] ml-[2px]">
              <svg viewBox="0 0 9 9" className="w-[9px] h-[9px]" aria-hidden>
                <path d="M1 1l7 7M8 1 1 8" stroke="#000" strokeWidth="1.6" />
              </svg>
            </Raised>
          </div>
        </div>
      </div>
      <div className="h-[21px] shrink-0 flex items-center pl-[6px] gap-[11px] text-[11px] text-[#808080]">
        {menu.map((m) => (
          <span key={m}>{m}</span>
        ))}
      </div>
      <div className="h-[28px] shrink-0 flex pl-[2px] border-t border-t-[#808080]">
        <Bar cls="w-[343px]" items={R1A} />
        <Bar cls="w-[282px]" items={R1B} />
        <Bar cls="flex-1" items={R1C} />
      </div>
      <div className="h-[29px] shrink-0 flex pl-[2px] border-b border-b-[#808080]">
        <Bar cls="w-[275px]" items={R2A} />
        <Bar cls="w-[297px]" items={R2B} />
        <Bar cls="flex-1" items={R2C} />
      </div>
      <div className="flex-1 flex min-h-0">
        <div className="w-[160px] shrink-0 flex flex-col">
          <div className="h-[19px] mx-[2px] pl-[2px] pt-[3px] flex items-center border-b border-b-[#0a246a] text-[12px] font-bold tracking-[-0.2px] text-[#0a246a] leading-none">
            Design Explorer
          </div>
          <Tree />
        </div>
        <div className="w-[3px] shrink-0 bg-[#808080]" />
        <div className="flex-1 bg-white min-w-0">
          <Scene />
        </div>
        <div className="w-[62px] shrink-0 flex border-l border-l-[#808080] bg-[#d4d0c8]">
          <SideCol data={COL1} cls="w-[28px] border-r border-r-[#808080]" sepCls="w-[21px]" />
          <SideCol data={COL2} cls="w-[29px] border-r border-r-[#a0a0a0]" sepCls="w-[22px]" />
        </div>
      </div>
      <Dialog />
      <svg viewBox="0 0 1089 861" className="absolute inset-0 w-[1089px] h-[861px] pointer-events-none drop-shadow-[2px_3px_2px_rgba(0,0,0,0.45)]" aria-hidden>
        <path d="M800 214 1048 331" stroke="#f00000" strokeWidth="4.5" />
        <polygon points="1051,318 1065,338 1042,342" fill="#f00000" />
      </svg>
    </div>
  );
}
